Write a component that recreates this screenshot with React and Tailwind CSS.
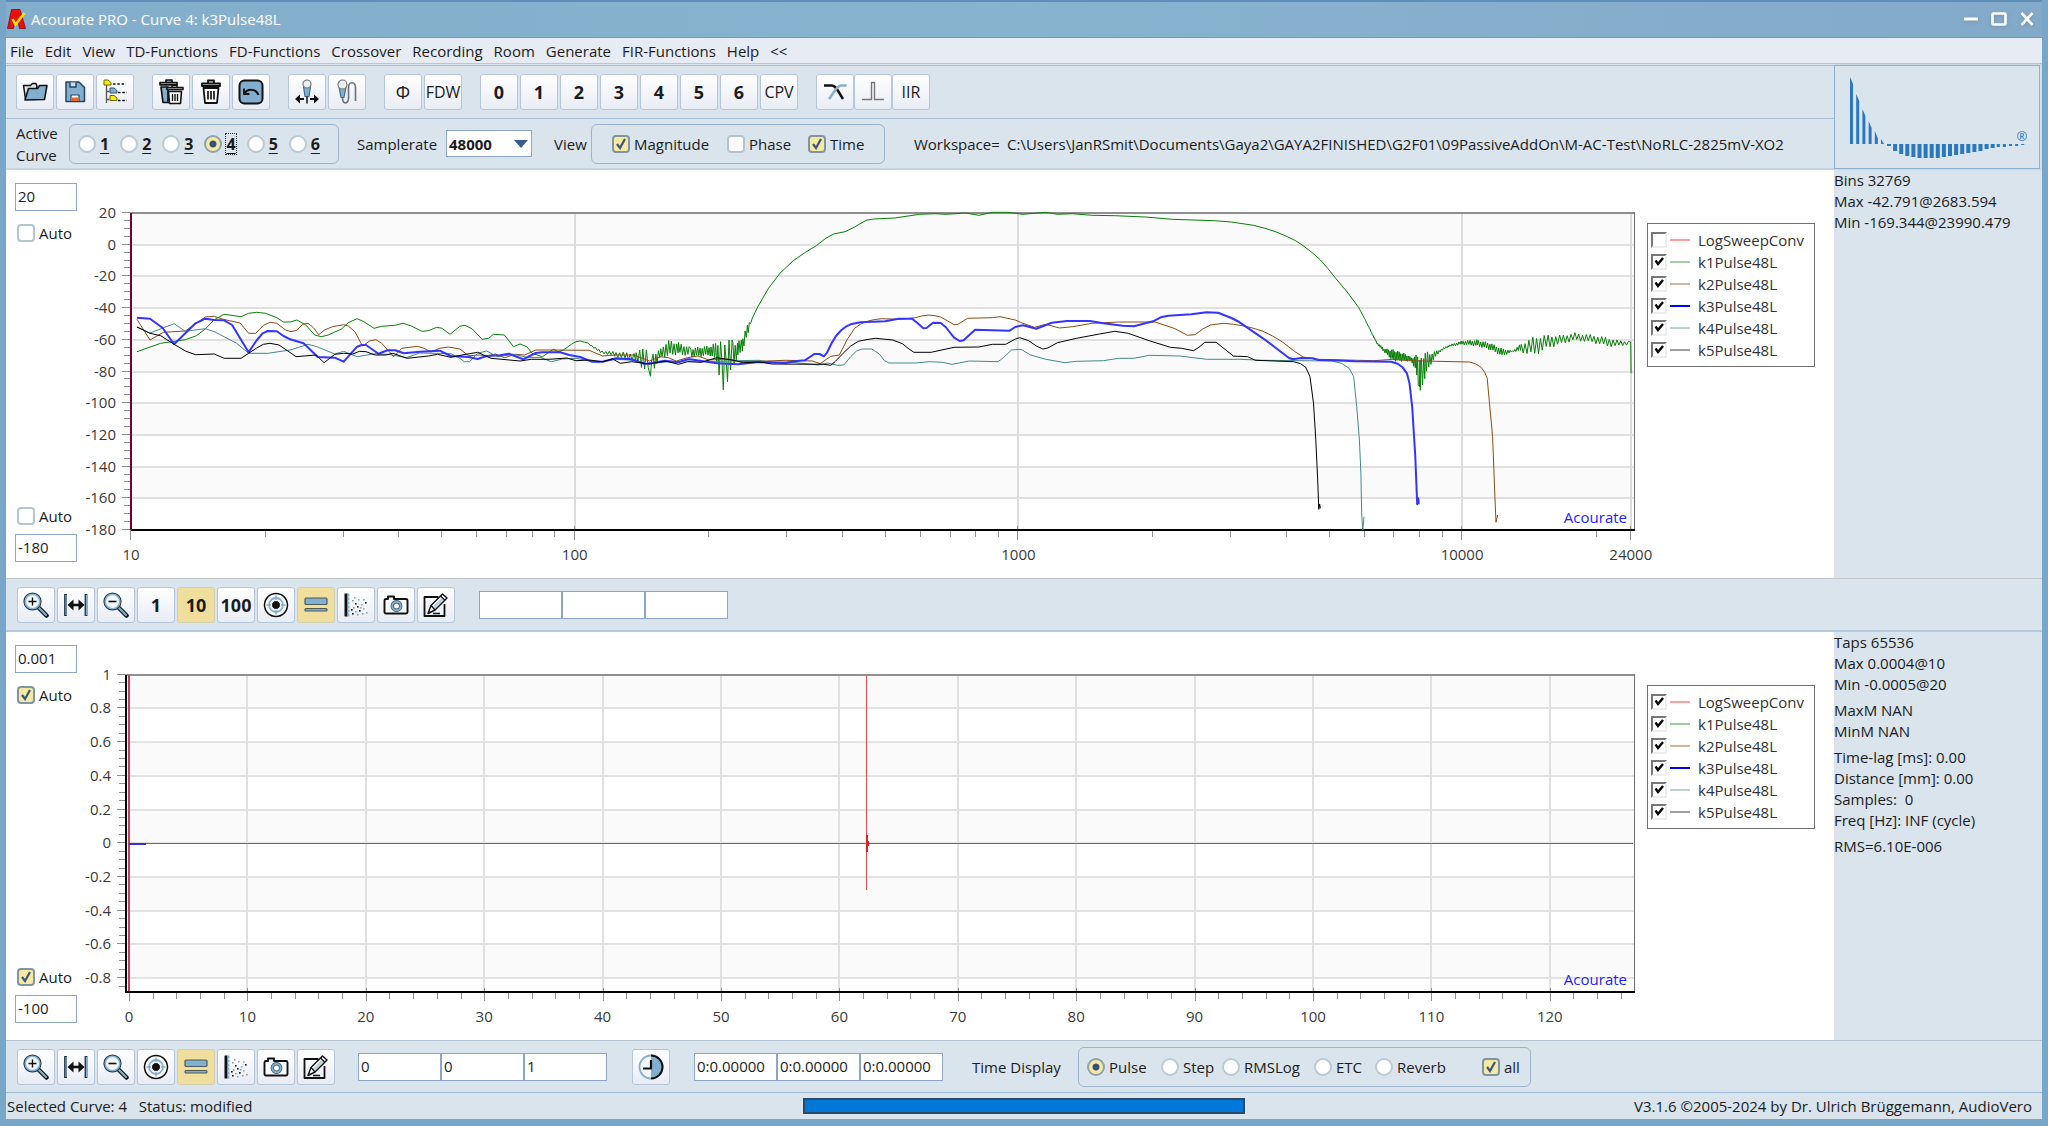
import React from "react";

/* ---------- curve data ---------- */

// A section is a run of flat x,y pairs stored relative to its own origin and scale.
const section = (ox, oy, sx, sy, flat) => {
  const out = [];
  for (let i = 0; i < flat.length; i += 2) out.push([ox + flat[i] * sx, oy + flat[i + 1] * sy]);
  return out;
};
const low = (flat) => section(0, 165, 0.4464, 1 / 3, flat);
const mid = (flat) => section(690, 190, 0.3827, 1 / 3, flat);
const high = (flat) => section(1240, 190, 0.3827, 1 / 3, flat);

// Ripple between anchors of [x, centre, amplitude].
const ripple = (anchors, step) => {
  const out = [];
  let n = 0;
  for (let i = 0; i < anchors.length - 1; i++) {
    const [x0, c0, a0] = anchors[i];
    const [x1, c1, a1] = anchors[i + 1];
    for (let x = x0; x < x1; x += step) {
      const t = (x - x0) / (x1 - x0);
      const size = 0.8 + 0.2 * Math.sin(n * 2.3);
      out.push(x, c0 + (c1 - c0) * t + (n % 2 ? 1 : -1) * (a0 + (a1 - a0) * t) * size);
      n++;
    }
  }
  return out;
};

const k1 = [
  ...low([307, 560, 360, 535, 415, 524, 440, 512, 460, 492, 480, 464, 502, 448, 540, 455, 557, 445, 575, 442, 595, 445, 620, 458, 635, 471, 650, 471, 665, 465, 685, 480, 705, 510, 720, 515, 735, 510, 765, 492, 780, 473, 800, 461, 815, 470, 838, 490, 855, 484, 885, 481, 903, 475, 920, 482, 945, 499, 960, 497, 978, 487, 990, 490, 1008, 508, 1030, 484, 1042, 481, 1058, 492, 1080, 523, 1095, 520, 1105, 508, 1130, 510, 1150, 545, 1165, 537, 1180, 545, 1192, 565, 1215, 575, 1240, 553, 1250, 560, 1262, 555, 1280, 538, 1290, 530, 1300, 528, 1310, 532]),
  ...low(ripple([[1318, 536, 2], [1345, 560, 4], [1380, 568, 8], [1425, 577, 14], [1440, 575, 38], [1454, 590, 30]], 4)),
  ...low([1457, 634, 1460, 585]),
  ...low(ripple([[1463, 590, 28], [1480, 565, 14], [1495, 550, 26], [1520, 550, 18], [1546, 560, 14]], 3)),
  ...mid(ripple([[2, 488, 14], [55, 482, 16], [75, 490, 40]], 3)),
  ...mid([76, 555, 80, 455, 84, 520, 87, 599, 91, 465, 95, 520, 98, 575, 102, 450, 106, 540, 110, 450]),
  ...mid(ripple([[112, 490, 40], [125, 480, 24], [138, 460, 22], [152, 415, 16], [160, 388, 3]], 3)),
  ...mid([163, 384, 175, 355, 190, 325, 205, 295, 235, 250, 270, 212, 300, 188, 330, 167, 355, 145, 375, 132, 405, 125, 430, 111, 460, 91, 480, 87, 535, 84, 600, 73, 640, 71, 670, 73, 720, 69, 755, 76, 790, 67, 830, 67, 870, 73, 930, 67, 960, 73, 1000, 71, 1050, 76, 1110, 77, 1190, 81, 1260, 88, 1370, 92, 1415, 96]),
  ...high([0, 100, 35, 106, 65, 115, 95, 126, 120, 138, 145, 152, 165, 167, 190, 189, 210, 210, 230, 236, 250, 265, 280, 306, 310, 352, 325, 385]),
  ...high(ripple([[328, 392, 2], [358, 460, 3], [378, 482, 6], [400, 496, 18], [430, 502, 12], [448, 508, 6], [458, 520, 22], [467, 535, 55]], 2)),
  ...high([469, 590, 470, 510, 471, 601, 473, 505]),
  ...high(ripple([[474, 545, 50], [484, 525, 42], [496, 508, 20], [520, 484, 4], [545, 468, 3], [580, 458, 6], [620, 459, 10], [655, 470, 11], [685, 487, 12], [712, 484, 2], [735, 472, 12]], 3)),
  ...high(ripple([[735, 474, 14], [770, 468, 30], [800, 456, 22], [840, 449, 14], [875, 440, 12], [920, 446, 12], [960, 456, 14], [985, 460, 10], [1020, 459, 5]], 5)),
  ...high([1021, 456, 1022, 550]),
];

const k2 = [
  ...low([307, 463, 336, 525, 366, 502, 415, 498, 440, 475, 460, 456, 480, 454, 500, 463, 538, 474, 557, 505, 573, 505, 590, 481, 605, 472, 620, 475, 640, 495, 652, 500, 665, 496, 678, 478, 690, 475, 702, 488, 714, 509, 728, 494, 745, 485, 770, 479, 780, 483, 795, 500, 812, 543, 828, 528, 842, 524, 855, 535, 882, 575, 900, 550, 935, 544, 950, 550, 965, 561, 985, 550, 1005, 546, 1030, 552, 1050, 572, 1075, 570, 1090, 573, 1110, 567, 1130, 578, 1155, 568, 1175, 570, 1200, 555, 1230, 555, 1320, 556, 1350, 573, 1380, 570, 1420, 570, 1455, 588, 1480, 575, 1497, 578, 1515, 588, 1540, 578]),
  ...mid([20, 498, 50, 510, 100, 507, 130, 515, 200, 513, 250, 511, 320, 513, 340, 521, 368, 499, 390, 495, 398, 478, 410, 450, 430, 415, 445, 403, 460, 395, 480, 389, 500, 386, 550, 388, 590, 383, 605, 378, 625, 375, 640, 377, 655, 381, 672, 392, 690, 404, 700, 403, 725, 385, 790, 383, 810, 380, 850, 390, 870, 400, 900, 412, 930, 403, 965, 414, 1000, 410, 1050, 400, 1120, 396, 1215, 396, 1265, 415, 1300, 436, 1320, 434, 1340, 417, 1360, 405, 1395, 400, 1420, 403]),
  ...high([0, 406, 30, 413, 60, 424, 85, 438, 110, 455, 140, 482, 165, 501, 200, 508, 350, 512, 400, 508, 440, 512, 600, 516, 615, 521, 630, 532, 640, 548, 646, 565, 652, 640, 660, 740, 666, 920, 669, 997, 673, 975]),
];

const k3 = [
  ...low([307, 458, 336, 461, 364, 488, 390, 538, 438, 475, 460, 461, 480, 465, 502, 466, 520, 480, 557, 562, 574, 528, 588, 505, 600, 498, 620, 499, 635, 513, 650, 523, 680, 535, 712, 576, 750, 578, 770, 590, 800, 545, 810, 540, 820, 540, 848, 566, 868, 556, 885, 556, 905, 565, 940, 560, 985, 557, 1010, 573, 1050, 576, 1070, 582, 1090, 573, 1120, 571, 1140, 566, 1172, 583, 1200, 564, 1215, 562, 1255, 562, 1275, 570, 1300, 576, 1325, 590, 1350, 590, 1380, 580, 1415, 583, 1445, 597, 1490, 587, 1520, 592, 1540, 583]),
  ...mid([0, 508, 70, 520, 125, 523, 180, 516, 250, 518, 280, 513, 300, 511, 325, 492, 338, 492, 350, 499, 358, 488, 370, 460, 382, 437, 395, 421, 407, 410, 420, 403, 445, 397, 510, 394, 545, 386, 580, 386, 595, 400, 610, 415, 618, 414, 635, 398, 655, 399, 668, 411, 690, 443, 705, 453, 715, 451, 745, 419, 835, 422, 850, 411, 870, 406, 905, 416, 945, 398, 985, 393, 1045, 393, 1080, 400, 1130, 407, 1160, 409, 1210, 394, 1230, 382, 1250, 377, 1310, 373, 1350, 367, 1380, 368, 1415, 384, 1435, 396]),
  ...high([0, 398, 60, 445, 128, 504, 138, 508, 160, 504, 190, 505, 205, 510, 240, 511, 300, 514, 395, 515, 412, 521, 425, 532, 436, 550, 443, 580, 450, 650, 458, 800, 463, 943, 466, 925, 467, 943]),
];

const k4 = [
  ...low([307, 486, 336, 504, 390, 476, 415, 499, 460, 491, 480, 500, 502, 515, 530, 535, 557, 565, 600, 565, 650, 555, 690, 538, 710, 545, 750, 567, 770, 559, 800, 575, 840, 566, 870, 568, 910, 578, 940, 564, 1010, 566, 1030, 580, 1040, 590, 1052, 590, 1070, 565, 1090, 558, 1115, 575, 1150, 568, 1185, 578, 1210, 577, 1235, 590, 1260, 582, 1290, 580, 1340, 592, 1380, 583, 1420, 586, 1450, 597, 1500, 590, 1540, 588]),
  ...mid([60, 515, 120, 512, 180, 511, 220, 518, 260, 516, 335, 525, 360, 519, 385, 526, 402, 525, 420, 500, 435, 483, 450, 477, 475, 477, 495, 492, 508, 512, 520, 519, 590, 519, 625, 515, 660, 517, 685, 523, 730, 513, 805, 515, 820, 502, 840, 480, 865, 478, 890, 495, 930, 508, 980, 518, 1010, 514, 1080, 512, 1120, 505, 1160, 505, 1200, 496, 1280, 498, 1350, 508, 1430, 508]),
  ...high([0, 508, 60, 511, 240, 513, 265, 520, 285, 535, 297, 560, 305, 650, 312, 750, 316, 850, 318, 975, 321, 1019, 324, 980]),
];

const k5 = [
  ...low([307, 486, 336, 505, 360, 512, 390, 538, 415, 558, 438, 569, 480, 567, 502, 580, 540, 580, 557, 565, 575, 549, 590, 538, 605, 535, 625, 540, 645, 558, 663, 575, 708, 570, 726, 593, 750, 568, 770, 565, 790, 567, 805, 559, 820, 560, 840, 570, 865, 570, 880, 565, 912, 580, 960, 573, 980, 568, 1010, 577, 1035, 570, 1070, 562, 1100, 580, 1165, 588, 1190, 583, 1230, 583, 1270, 579, 1290, 587, 1320, 585, 1350, 590, 1372, 582, 1390, 595, 1415, 590, 1455, 597, 1490, 588, 1520, 598, 1540, 590]),
  ...mid([30, 517, 70, 503, 110, 510, 140, 518, 180, 516, 215, 522, 350, 523, 368, 526, 380, 514, 400, 490, 420, 468, 440, 454, 460, 449, 485, 445, 530, 450, 555, 461, 570, 475, 585, 487, 630, 487, 690, 472, 755, 471, 790, 463, 825, 463, 850, 447, 862, 443, 885, 452, 905, 468, 922, 477, 935, 474, 960, 458, 1010, 445, 1070, 432, 1110, 424, 1145, 430, 1200, 452, 1255, 472, 1285, 475, 1315, 482, 1330, 472, 1345, 457, 1375, 457, 1400, 480, 1420, 498, 1430, 499]),
  ...high([0, 499, 20, 500, 40, 511, 140, 515, 158, 521, 172, 532, 183, 560, 192, 640, 198, 750, 203, 870, 206, 958, 208, 942, 210, 955]),
];

const toPoints = (pts) => pts.map(([x, y]) => `${x.toFixed(1)},${y.toFixed(1)}`).join(" ");

const CURVES = [
  { name: "k1", pts: k1, color: "#088008", width: 1 },
  { name: "k2", pts: k2, color: "#8a4c14", width: 1 },
  { name: "k4", pts: k4, color: "#468888", width: 1 },
  { name: "k3", pts: k3, color: "#3434ff", width: 2 },
  { name: "k5", pts: k5, color: "#000000", width: 1 },
];

const LEGEND = [
  { label: "LogSweepConv", color: "#ff7f7f", width: 1 },
  { label: "k1Pulse48L", color: "#7fbf7f", width: 1 },
  { label: "k2Pulse48L", color: "#c09f80", width: 1 },
  { label: "k3Pulse48L", color: "#0000ff", width: 2 },
  { label: "k4Pulse48L", color: "#9fc4c4", width: 1 },
  { label: "k5Pulse48L", color: "#7f7f7f", width: 1 },
];

const range = (n) => Array.from({ length: n }, (_, i) => i);

/* ---------- charts ---------- */

function MagnitudeChart() {
  const top = 213, bottom = 530, left = 131, right = 1634;
  const yOf = (db) => top + ((20 - db) * (bottom - top)) / 200;
  const xOf = (f) => left + Math.log10(f / 10) * 443.7;
  const minors = [];
  [10, 100, 1000, 10000].forEach((d) => range(8).forEach((i) => {
    const f = d * (i + 2);
    if (f < 24000) minors.push(f);
  }));
  const majors = [10, 100, 1000, 10000, 24000];
  return (
    <svg viewBox="80 170 1560 408" className="block h-auto w-full overflow-visible" role="img" aria-label="Magnitude">
      <g shapeRendering="crispEdges">
        {range(5).map((i) => (
          <rect key={i} x={left} y={yOf(20 - i * 40)} width={right - left} height={yOf(0) - yOf(20)} fill="#fafafa" />
        ))}
        {range(9).map((i) => (
          <rect key={i} x={left} y={Math.round(yOf(-i * 20)) - 1} width={right - left} height="2" fill="#e0e0e0" />
        ))}
        {range(41).map((i) => (
          <rect key={i} x={i % 4 ? 124 : 122} y={Math.round(yOf(20 - i * 5)) - 1} width={i % 4 ? 7 : 9} height="1" fill="#8f8f8f" />
        ))}
        {majors.slice(1).map((f) => (
          <rect key={f} x={Math.round(xOf(f)) - 1} y={top} width="2" height={bottom - top} fill="#dcdcdc" />
        ))}
        {minors.map((f) => (
          <rect key={f} x={Math.round(xOf(f))} y="531" width="1" height="6" fill="#8f8f8f" />
        ))}
        {majors.map((f) => (
          <rect key={f} x={Math.round(xOf(f)) - 1} y="526" width="1" height="14" fill="#8f8f8f" />
        ))}
        <rect x={left} y="212" width={right - left + 1} height="2" fill="#8f8f8f" />
        <rect x={right} y="212" width="1" height="319" fill="#6f6f6f" />
        <rect x={left} y="529" width={right - left + 1} height="2" fill="#000" />
        <rect x="130" y="213" width="2" height="317" fill="#720038" />
      </g>
      {CURVES.map((c) => (
        <polyline key={c.name} points={toPoints(c.pts)} fill="none" stroke={c.color} strokeWidth={c.width} strokeLinejoin="round" />
      ))}
      <g className="fill-[#3a3a3a] text-[15px]">
        {range(11).map((i) => (
          <text key={i} x="116" y={yOf(20 - i * 20) + 5} textAnchor="end">{20 - i * 20}</text>
        ))}
        {majors.map((f) => (
          <text key={f} x={xOf(f)} y="560" textAnchor="middle">{f}</text>
        ))}
      </g>
      <text x="1627" y="523" textAnchor="end" className="fill-[#2222ff] text-[15px]">Acourate</text>
    </svg>
  );
}

function TimeChart() {
  const top = 675, bottom = 992, left = 126, right = 1634;
  const yOf = (v) => 843.3 - v * 168.6;
  const xOf = (v) => 129 + v * 11.84;
  return (
    <svg viewBox="80 632 1560 408" className="block h-auto w-full overflow-visible" role="img" aria-label="Time">
      <g shapeRendering="crispEdges">
        {range(5).map((i) => (
          <rect key={i} x={left} y={yOf(1 - i * 0.4)} width={right - left} height="34" fill="#fafafa" />
        ))}
        {range(9).map((i) => (
          <rect key={i} x={left} y={Math.round(yOf(0.8 - i * 0.2)) - 1} width={right - left} height="2" fill="#e2e2e2" />
        ))}
        {range(38).map((i) => (
          <rect key={i} x={i % 4 ? 119 : 117} y={Math.round(yOf(1 - i * 0.05)) - 1} width={i % 4 ? 7 : 9} height="1" fill="#8f8f8f" />
        ))}
        {range(12).map((i) => (
          <rect key={i} x={Math.round(xOf((i + 1) * 10)) - 1} y={top} width="2" height={bottom - top} fill="#e0e0e0" />
        ))}
        {range(64).map((i) => (
          <rect key={i} x={Math.round(xOf(i * 2))} y={i % 5 ? 993 : 988} width="1" height={i % 5 ? 6 : 13} fill="#8f8f8f" />
        ))}
        <rect x={left} y="674" width={right - left + 1} height="2" fill="#8f8f8f" />
        <rect x={right} y="674" width="1" height="319" fill="#6f6f6f" />
        <rect x="125" y="675" width="2" height="318" fill="#000" />
        <rect x={left} y="991" width={right - left + 1} height="2" fill="#000" />
        <rect x="128" y="675" width="2" height="316" fill="#c04060" />
        <rect x="129" y="843" width="1504" height="1" fill="#e03a3a" />
        <rect x="129" y="843" width="17" height="2" fill="#3030e0" />
        <rect x="866" y="675" width="1" height="215" fill="#f04848" />
        <rect x="866" y="835" width="2" height="17" fill="#e02020" />
        <rect x="868" y="841" width="1" height="5" fill="#e02020" />
      </g>
      <g className="fill-[#3a3a3a] text-[15px]">
        {range(10).map((i) => (
          <text key={i} x="111" y={yOf(1 - i * 0.2) + 5} textAnchor="end">{Number((1 - i * 0.2).toFixed(1))}</text>
        ))}
        {range(13).map((i) => (
          <text key={i} x={xOf(i * 10)} y="1022" textAnchor="middle">{i * 10}</text>
        ))}
      </g>
      <text x="1627" y="985" textAnchor="end" className="fill-[#2222ff] text-[15px]">Acourate</text>
    </svg>
  );
}

/* ---------- controls ---------- */

function Check({ label, checked, className = "" }) {
  return (
    <label className={`flex items-center gap-1 ${className}`}>
      <span className="grid">
        <input
          type="checkbox"
          defaultChecked={checked}
          className="peer col-start-1 row-start-1 h-[18px] w-[18px] appearance-none rounded border-2 border-[#b3c6cf] bg-white checked:border-[#8095a3] checked:bg-[#f5eaa0]"
        />
        <svg viewBox="0 0 18 18" className="pointer-events-none invisible col-start-1 row-start-1 h-[18px] w-[18px] peer-checked:visible">
          <path d="M5 9l3 4 5-9" fill="none" stroke="#3a5580" strokeWidth="2.2" />
        </svg>
      </span>
      {label}
    </label>
  );
}

function Radio({ name, label, checked, className = "" }) {
  return (
    <label className={`flex items-center gap-1 ${className}`}>
      <input
        type="radio"
        name={name}
        defaultChecked={checked}
        className="h-[18px] w-[18px] appearance-none rounded-full border-2 border-[#b9cad3] bg-white checked:border-[#8fa3ae] checked:bg-[radial-gradient(circle,#36507c_3px,#f5eaa0_4px)]"
      />
      {label}
    </label>
  );
}

function Tool({ label, active, children, className = "" }) {
  return (
    <button
      type="button"
      aria-label={label}
      className={`flex h-9 w-[38px] shrink-0 items-center justify-center rounded-[3px] border whitespace-nowrap ${active ? "border-[#cfd0b4] bg-[#f0df9c]" : "border-[#b4c7dd] bg-linear-to-b from-white to-[#e8ecf4]"} ${className}`}
    >
      {children}
    </button>
  );
}

function Field({ value, label, className = "" }) {
  return (
    <input
      type="text"
      aria-label={label}
      defaultValue={value}
      className={`h-7 border border-[#8ba6c9] bg-white px-0.5 pb-0.5 text-[15px] ${className}`}
    />
  );
}

/* ---------- icons ---------- */

const B = "#82afcf";
const K = "#111";

function Icon({ children }) {
  return (
    <svg viewBox="0 0 26 26" className="h-[26px] w-[26px] shrink-0" fill="none" stroke={K} strokeWidth="1.5" strokeLinejoin="round" aria-hidden="true">
      {children}
    </svg>
  );
}

const FolderIcon = () => (
  <Icon>
    <path d="M1.500 6.500h7l2-2H14l1 3-1 3H7L3.500 20z" fill="#dbe7f0" />
    <path d="M3 21L6.500 9.500h9l2-3h7.500l-2.500 14z" fill={B} />
  </Icon>
);
const SaveIcon = () => (
  <Icon>
    <path d="M4 3h13l5.500 5.500V22.500H4z" fill={B} stroke="#24455f" />
    <path d="M8 3.500v4.500h6V3.500" fill="#cfe0ec" stroke="#24455f" />
    <path d="M9 22v-6h8v6" fill="#fff" stroke="#24455f" strokeWidth="1.200" />
    <rect x="9.500" y="18.500" width="7" height="3.500" fill="#e8641e" stroke="none" />
  </Icon>
);
const TreeIcon = () => (
  <Icon>
    <path d="M4.500 6v18M4.500 12.500h3M4.500 20.500h3" stroke="#555" strokeWidth="1.300" />
    <path d="M11 5h13M16 13.500h9M16 21.500h9" strokeDasharray="2.500 1.800" />
    <path d="M2 1h4l3 2.500V6H2z" fill="#ffee00" stroke="#6b6400" strokeWidth="1" />
    <path d="M8 9h4l3 2.500V14H8z" fill={B} stroke="#34556f" strokeWidth="1" />
    <path d="M8 16.500h4l3 2.500v2.500H8z" fill="#ffee00" stroke="#6b6400" strokeWidth="1" />
  </Icon>
);
const TrashIcon = () => (
  <Icon>
    <path d="M10 3.500V1.500h6v2M4 4.500h18v2.500H4zM5.500 9l1.500 15h12L20.500 9z" strokeWidth="1.800" fill="#fff" />
    <path d="M10 12v8.500M13 12v8.500M16 12v8.500" strokeWidth="1.700" />
  </Icon>
);
const TrashAllIcon = () => (
  <Icon>
    <path d="M8 3V1h6v2M2 3.500h17v2.300H2z" fill={B} strokeWidth="1.700" />
    <path d="M3 8h7v15.500H5z" fill={B} strokeWidth="1.700" />
    <path d="M14 8V6.500h5V8" strokeWidth="1.500" />
    <path d="M9 8.500h16v2H9zM10.500 12.500l1 12h11l1-12z" fill="#fff" strokeWidth="1.600" />
    <path d="M14.500 15v7M17 15v7M19.500 15v7" strokeWidth="1.400" />
  </Icon>
);
const UndoIcon = () => (
  <Icon>
    <rect x="1.500" y="1.500" width="23" height="23" rx="5" fill={B} strokeWidth="2" />
    <path d="M7 14c2-4 11-5 13.500 2" strokeWidth="2" />
    <path d="M6 9.500v5.500h5.500" strokeWidth="1.800" />
  </Icon>
);
const MicMoveIcon = () => (
  <Icon>
    <path d="M9.500 7.500h7l-1.500 10h-4z" fill={B} stroke="#42698a" strokeWidth="1.200" />
    <circle cx="13" cy="5" r="4" fill="#e9eef2" stroke="#777" strokeWidth="1.200" />
    <path d="M13 17.500v7" strokeWidth="1.500" />
    <path d="M2 20h8M16 20h8" strokeWidth="2.200" />
    <path d="M6 15.500L1 20l5 4.500zM20 15.500l5 4.500-5 4.500z" fill={K} stroke="none" />
  </Icon>
);
const MicCableIcon = () => (
  <Icon>
    <path d="M5 8h7l-2 10.500H7z" fill={B} stroke="#42698a" strokeWidth="1.200" />
    <circle cx="8.500" cy="5.500" r="4.500" fill="#e9eef2" stroke="#777" strokeWidth="1.200" />
    <path d="M8.500 18.500c0 7 5.500 7 6 1V9c0-7 7-7 7 0v13" stroke="#6f777e" strokeWidth="1.700" />
  </Icon>
);
const CrossoverIcon = () => (
  <Icon>
    <path d="M2 6.500h8c4 0 6 6 11 13.500" strokeWidth="2.600" />
    <path d="M24.500 6.500H19c-4 0-7 7-12 13.500" stroke={B} strokeWidth="2.600" />
  </Icon>
);
const PulseIcon = () => (
  <Icon>
    <path d="M2 20.500h9.500v-17h3v17H24" stroke="#777" strokeWidth="1.400" />
  </Icon>
);
const Lens = ({ children }) => (
  <Icon>
    <path d="M14.500 14.500l9 9" strokeWidth="4.500" strokeLinecap="round" />
    <path d="M15.500 15.500l7.500 7.500" stroke={B} strokeWidth="2.200" strokeLinecap="round" />
    <circle cx="9.500" cy="9.500" r="7.300" stroke="#223744" strokeWidth="3.600" />
    <circle cx="9.500" cy="9.500" r="7.300" fill="#f4f7fa" stroke={B} strokeWidth="1.600" />
    {children}
  </Icon>
);
const ZoomInIcon = () => <Lens><path d="M5.500 9.500h8M9.500 5.500v8" strokeWidth="1.400" /></Lens>;
const ZoomOutIcon = () => <Lens><path d="M5.500 9.500h8" strokeWidth="1.600" /></Lens>;
const FitIcon = () => (
  <Icon>
    <path d="M2.500 2v22M23 2v22" stroke="#23323f" strokeWidth="2.800" />
    <path d="M3 3v20M23.500 3v20" stroke={B} strokeWidth="1.200" />
    <path d="M7 13h12" strokeWidth="2.600" />
    <path d="M10.500 7.500L4.500 13l6 5.500zM15.500 7.500l6 5.500-6 5.500z" fill={K} stroke="none" />
  </Icon>
);
const TargetIcon = () => (
  <Icon>
    <circle cx="13" cy="13" r="11.500" fill="#fff" />
    <circle cx="13" cy="13" r="7" stroke={B} strokeWidth="1.800" />
    <path d="M13 3.500v19M3.500 13h19" stroke={B} strokeWidth="1.500" />
    <circle cx="13" cy="13" r="4.500" fill={K} stroke="#fff" strokeWidth="1" />
  </Icon>
);
const BarsIcon = () => (
  <Icon>
    <rect x="2" y="6" width="22" height="6.500" rx="1" fill={B} stroke="#4d5b55" strokeWidth="1.200" />
    <rect x="2" y="16.500" width="22" height="2.500" rx="1" fill={B} stroke="#4d5b55" strokeWidth="1.200" />
  </Icon>
);
const DOTS = [[9, 8], [12, 11], [15, 7], [10, 15], [14, 14], [18, 12], [12, 19], [16, 18], [20, 16], [23, 20], [9, 21], [14, 22], [19, 21], [22, 10], [17, 15], [11, 5], [8, 17], [20, 7]];
const ScatterIcon = () => (
  <Icon>
    <path d="M3 1.500v23" strokeWidth="3" />
    <path d="M5.500 1.500v23" stroke={B} strokeWidth="1.800" strokeDasharray="3 1" />
    {DOTS.map(([x, y], i) => (
      <rect key={i} x={x} y={y} width="1.600" height="1.600" fill={i % 3 === 1 ? K : i % 3 ? B : "#8fa0ac"} stroke="none" />
    ))}
  </Icon>
);
const CameraIcon = () => (
  <Icon>
    <path d="M3 7h2V4.500h6V7h12a1.500 1.500 0 0 1 1.500 1.500V20a1.500 1.500 0 0 1-1.500 1.500H3A1.500 1.500 0 0 1 1.500 20V8.500A1.500 1.500 0 0 1 3 7z" fill="#fafbfd" strokeWidth="1.900" />
    <circle cx="13.500" cy="14" r="4.200" fill="#fff" stroke="#33566f" strokeWidth="3.400" />
    <circle cx="13.500" cy="14" r="4.200" stroke={B} strokeWidth="2" />
  </Icon>
);
const EditIcon = () => (
  <Icon>
    <path d="M21.500 12v12h-20V5h14" strokeWidth="1.800" />
    <path d="M5 21.500l3-8L19.500 2l4.500 4L12 18z" fill="#fff" />
    <path d="M10 14.500L18.500 6l2 1.800-8.500 8.700z" fill="#b9d0e2" stroke="none" />
    <path d="M8 13.500l4 4.500M17.500 4l4.500 4.200M5 21.500l2.500-1.500M10 21.500h7" strokeWidth="1.300" />
  </Icon>
);
const ClockIcon = () => (
  <Icon>
    <circle cx="13" cy="13" r="11.500" fill="#f4f7fa" stroke={B} strokeWidth="1.800" />
    <path d="M13 1.500a11.500 11.500 0 0 1 0 23z" fill={B} stroke="none" />
    <path d="M13 1.500a11.500 11.500 0 0 1 0 23" strokeWidth="2" />
    <path d="M13 6v8.500H5" strokeWidth="2.200" />
  </Icon>
);

/* ---------- page sections ---------- */

const MENU = ["File", "Edit", "View", "TD-Functions", "FD-Functions", "Crossover", "Recording", "Room", "Generate", "FIR-Functions", "Help", "<<"];

function TitleBar() {
  return (
    <header className="flex h-[38px] items-center border-t-2 border-b border-t-[#5f8fb8] border-b-[#7199ba] bg-linear-to-r from-[#83aecb] via-[#87b3cf] to-[#84aac9] pb-0.5 pl-px text-white">
      <svg viewBox="0 0 20 20" className="h-5 w-5" aria-hidden="true">
        <path d="M0.500 19.500L4.500 0.500H13l5.500 19h-6l-1-5H7.500l-1 5z" fill="#f00c0c" stroke="#7a1010" strokeWidth="0.800" />
        <path d="M5.500 10l3 5.500L17.500 4" fill="none" stroke="#ffe600" strokeWidth="2.600" />
      </svg>
      <h1 className="ml-1 flex-1 text-[15px]">Acourate PRO - Curve 4: k3Pulse48L</h1>
      <div className="mr-[7px] flex items-center gap-3 drop-shadow">
        <button type="button" aria-label="Minimize">
          <svg viewBox="0 0 16 16" className="h-4 w-4"><path d="M1 8h14" stroke="#fff" strokeWidth="3" /></svg>
        </button>
        <button type="button" aria-label="Maximize">
          <svg viewBox="0 0 16 16" className="h-4 w-4"><rect x="1.500" y="2.500" width="13" height="11" rx="1" fill="none" stroke="#fff" strokeWidth="2.600" /></svg>
        </button>
        <button type="button" aria-label="Close">
          <svg viewBox="0 0 16 16" className="h-4 w-4"><path d="M2.500 2l11 12M13.500 2l-11 12" stroke="#fff" strokeWidth="2.600" /></svg>
        </button>
      </div>
    </header>
  );
}

function MenuBar() {
  return (
    <nav className="flex h-[26px] items-center gap-[11px] border-b border-[#b5c8da] bg-[#e7ebf4] pl-1">
      {MENU.map((m) => (
        <button key={m} type="button" className="whitespace-nowrap">{m}</button>
      ))}
    </nav>
  );
}

function MainTools() {
  return (
    <div className="flex items-center gap-[18px] border-t border-b border-[#a9c1d8] pt-2 pr-2 pb-2 pl-2.5">
      <div className="flex gap-0.5">
        <Tool label="Open"><FolderIcon /></Tool>
        <Tool label="Save"><SaveIcon /></Tool>
        <Tool label="Directory tree"><TreeIcon /></Tool>
      </div>
      <div className="flex gap-0.5">
        <Tool label="Delete all"><TrashAllIcon /></Tool>
        <Tool label="Delete"><TrashIcon /></Tool>
        <Tool label="Undo"><UndoIcon /></Tool>
      </div>
      <div className="flex gap-0.5">
        <Tool label="Move microphone"><MicMoveIcon /></Tool>
        <Tool label="Microphone"><MicCableIcon /></Tool>
      </div>
      <div className="flex gap-0.5">
        <Tool className="text-lg">Φ</Tool>
        <Tool className="text-base">FDW</Tool>
      </div>
      <div className="flex gap-0.5">
        {range(7).map((i) => (
          <Tool key={i} className="text-lg font-bold">{i}</Tool>
        ))}
        <Tool className="text-base">CPV</Tool>
      </div>
      <div className="flex">
        <Tool label="Crossover"><CrossoverIcon /></Tool>
        <Tool label="Pulse"><PulseIcon /></Tool>
        <Tool className="text-base">IIR</Tool>
      </div>
    </div>
  );
}

function CurveBar() {
  return (
    <div className="flex flex-1 items-center border-b-2 border-[#c3d4e2] pl-2.5 whitespace-nowrap">
      <div className="w-[53px] leading-[22px]">Active<br />Curve</div>
      <fieldset className="flex h-10 w-[270px] items-center gap-[11px] rounded-md border border-[#9db4cf] pl-2">
        {range(6).map((i) => (
          <Radio
            key={i}
            name="curve"
            checked={i === 3}
            label={<span className={`text-base leading-5 font-bold underline underline-offset-3 ${i === 3 ? "outline-1 outline-[#333] outline-dotted" : ""}`}>{i + 1}</span>}
          />
        ))}
      </fieldset>
      <label htmlFor="rate" className="ml-[18px] w-[89px]">Samplerate</label>
      <div className="grid w-[86px]">
        <select id="rate" className="col-start-1 row-start-1 h-[27px] appearance-none border border-[#8ba6c9] bg-white pl-0.5 text-[15px] font-bold">
          <option>48000</option>
        </select>
        <svg viewBox="0 0 14 8" className="pointer-events-none col-start-1 row-start-1 mr-1 h-2 w-3.5 self-center justify-self-end">
          <path d="M0 0h14L7 8z" fill="#3a5a92" />
        </svg>
      </div>
      <span className="ml-[22px] w-[37px]">View</span>
      <fieldset className="flex h-10 w-[294px] items-center rounded-md border border-[#9db4cf] pl-5">
        <Check label="Magnitude" checked className="w-[115px]" />
        <Check label="Phase" className="w-[81px]" />
        <Check label="Time" checked />
      </fieldset>
      <span className="ml-[29px] w-[93px]">Workspace=</span>
      <span>C:\Users\JanRSmit\Documents\Gaya2\GAYA2FINISHED\G2F01\09PassiveAddOn\M-AC-Test\NoRLC-2825mV-XO2</span>
    </div>
  );
}

function Brand() {
  const up = [67, 50, 35, 23, 13, 5];
  const down = [2, 7, 10, 12, 13, 14, 14, 14, 14, 13, 12, 11, 10, 9, 8, 7, 5, 4, 3, 3, 2, 2, 1];
  return (
    <div className="w-[208px] shrink-0 border-y border-r border-[#c9d9e6] pr-px">
      <div className="h-full w-[206px] border border-[#8fb0cf]">
        <svg viewBox="0 0 204 102" className="h-full w-full" role="img" aria-label="AudioVero">
          {up.map((h, i) => (
            <path key={i} d={`M${15 + i * 6.200} 78v${-h}l3 ${Math.min(7, h)}v${Math.max(0, h - 7)}z`} fill="#2b78bd" />
          ))}
          {down.map((h, i) => (
            <rect key={i} x={52 + i * 6.100} y="78" width={i > 17 ? 3 : 4} height={h} fill="#2b78bd" />
          ))}
          <text x="187" y="75" textAnchor="middle" className="fill-[#2b78bd] text-[13px]">®</text>
        </svg>
      </div>
    </div>
  );
}

function ScaleColumn({ upper, lower, auto, className }) {
  return (
    <div className={`flex w-[74px] shrink-0 flex-col justify-between pt-[13px] pl-[9px] ${className}`}>
      <div className="flex flex-col gap-[13px]">
        <Field label="Upper limit" value={upper} className="w-[62px]" />
        <Check label="Auto" checked={auto} className="h-[18px] pl-0.5" />
      </div>
      <div className="flex flex-col gap-[9px]">
        <Check label="Auto" checked={auto} className="h-[18px] pl-0.5" />
        <Field label="Lower limit" value={lower} className="w-[62px]" />
      </div>
    </div>
  );
}

function Legend({ hidden = [] }) {
  return (
    <div className="w-[194px] shrink-0 pt-[53px] pl-[7px]">
      <ul className="w-[168px] border border-[#707070] bg-white pt-[5px] pb-[5px] pl-[3px]">
        {LEGEND.map((l) => (
          <li key={l.label}>
            <label className="flex h-[22px] items-center">
              <span className="grid">
                <input
                  type="checkbox"
                  defaultChecked={!hidden.includes(l.label)}
                  className="peer col-start-1 row-start-1 h-4 w-4 appearance-none border-2 border-t-[#777] border-r-[#eee] border-b-[#eee] border-l-[#777] bg-white"
                />
                <svg viewBox="0 0 16 16" className="pointer-events-none invisible col-start-1 row-start-1 h-4 w-4 peer-checked:visible">
                  <path d="M4.500 6.500l2.500 3.500 5-6" fill="none" stroke="#000" strokeWidth="2.400" />
                </svg>
              </span>
              <svg viewBox="0 0 20 4" className="ml-[3px] h-1 w-5" aria-hidden="true">
                <path d="M0 2h20" stroke={l.color} strokeWidth={l.width === 2 ? 2 : 1.500} />
              </svg>
              <span className="ml-2 text-[#333]">{l.label}</span>
            </label>
          </li>
        ))}
      </ul>
    </div>
  );
}

function Stats({ blocks }) {
  return (
    <aside className="flex w-[208px] shrink-0 flex-col gap-[5px] leading-[21px] whitespace-pre">
      {blocks.map((lines, i) => (
        <div key={i}>
          {lines.map((t) => (
            <p key={t}>{t}</p>
          ))}
        </div>
      ))}
    </aside>
  );
}

export default function App() {
  return (
    <div className="flex min-h-screen flex-col bg-[#d9e4ed] font-['Open_Sans','Noto_Sans',sans-serif] text-[15px] leading-5 text-[#1c1c1c]">
      <div className="flex flex-1 flex-col border-x-[6px] border-b-[7px] border-[#78a6c8]">
        <TitleBar />
        <MenuBar />
        <div className="flex h-[106px]">
          <div className="flex min-w-0 flex-1 flex-col pt-px">
            <MainTools />
            <CurveBar />
          </div>
          <Brand />
        </div>

        <section className="flex">
          <div className="flex min-w-0 flex-1 bg-white">
            <ScaleColumn upper="20" lower="-180" auto={false} className="pb-4" />
            <div className="min-w-0 flex-1"><MagnitudeChart /></div>
            <Legend hidden={["LogSweepConv"]} />
          </div>
          <Stats blocks={[["Bins 32769", "Max -42.791@2683.594", "Min -169.344@23990.479"]]} />
        </section>

        <div className="flex h-[54px] items-center border-t border-b-2 border-t-[#c2c6ca] border-b-[#b4cae0] pl-[11px]">
          <div className="flex gap-0.5">
            <Tool label="Zoom in"><ZoomInIcon /></Tool>
            <Tool label="Fit width"><FitIcon /></Tool>
            <Tool label="Zoom out"><ZoomOutIcon /></Tool>
            <Tool className="text-lg font-bold">1</Tool>
            <Tool active className="text-lg font-bold">10</Tool>
            <Tool className="text-lg font-bold">100</Tool>
            <Tool label="Target"><TargetIcon /></Tool>
            <Tool label="Bands" active><BarsIcon /></Tool>
            <Tool label="Scatter"><ScatterIcon /></Tool>
            <Tool label="Snapshot"><CameraIcon /></Tool>
            <Tool label="Edit"><EditIcon /></Tool>
          </div>
          <div className="ml-6 flex">
            <Field label="Frequency" className="w-[83px]" />
            <Field label="Level" className="w-[83px]" />
            <Field label="Phase" className="w-[83px]" />
          </div>
        </div>

        <section className="flex">
          <div className="flex min-w-0 flex-1 bg-white">
            <ScaleColumn upper="0.001" lower="-100" auto className="pb-[17px]" />
            <div className="min-w-0 flex-1"><TimeChart /></div>
            <Legend />
          </div>
          <Stats
            blocks={[
              ["Taps 65536", "Max 0.0004@10", "Min -0.0005@20"],
              ["MaxM NAN", "MinM NAN"],
              ["Time-lag [ms]: 0.00", "Distance [mm]: 0.00", "Samples:  0", "Freq [Hz]: INF (cycle)"],
              ["RMS=6.10E-006"],
            ]}
          />
        </section>

        <div className="flex h-[53px] items-center border-y border-t-[#b4c4d2] border-b-[#9fbcd6] pl-[11px]">
          <div className="flex gap-0.5">
            <Tool label="Zoom in"><ZoomInIcon /></Tool>
            <Tool label="Fit width"><FitIcon /></Tool>
            <Tool label="Zoom out"><ZoomOutIcon /></Tool>
            <Tool label="Target"><TargetIcon /></Tool>
            <Tool label="Bands" active><BarsIcon /></Tool>
            <Tool label="Scatter"><ScatterIcon /></Tool>
            <Tool label="Snapshot"><CameraIcon /></Tool>
            <Tool label="Edit"><EditIcon /></Tool>
          </div>
          <div className="ml-[23px] flex">
            <Field label="Sample" value="0" className="w-[83px]" />
            <Field label="Offset" value="0" className="w-[83px]" />
            <Field label="Factor" value="1" className="w-[83px]" />
          </div>
          <Tool label="Clock" className="ml-[25px]"><ClockIcon /></Tool>
          <div className="ml-6 flex">
            <Field label="Start" value="0:0.00000" className="w-[83px]" />
            <Field label="End" value="0:0.00000" className="w-[83px]" />
            <Field label="Length" value="0:0.00000" className="w-[83px]" />
          </div>
          <span className="ml-[29px] w-[106px] whitespace-nowrap">Time Display</span>
          <fieldset className="flex h-10 w-[453px] items-center rounded-md border border-[#9db4cf] pl-2">
            <Radio name="display" label="Pulse" checked className="w-[74px]" />
            <Radio name="display" label="Step" className="w-[61px]" />
            <Radio name="display" label="RMSLog" className="w-[92px]" />
            <Radio name="display" label="ETC" className="w-[61px]" />
            <Radio name="display" label="Reverb" className="w-[107px]" />
            <Check label="all" checked />
          </fieldset>
        </div>

        <footer className="grid flex-1 grid-cols-[1fr_442px_1fr] items-center">
          <span className="pl-px whitespace-pre">Selected Curve: 4   Status: modified</span>
          <div role="progressbar" aria-label="Progress" aria-valuenow={100} className="h-4 border-2 border-[#2c4a66] bg-[#0078d9]" />
          <span className="pr-2.5 text-right">V3.1.6 ©2005-2024 by Dr. Ulrich Brüggemann, AudioVero</span>
        </footer>
      </div>
    </div>
  );
}
